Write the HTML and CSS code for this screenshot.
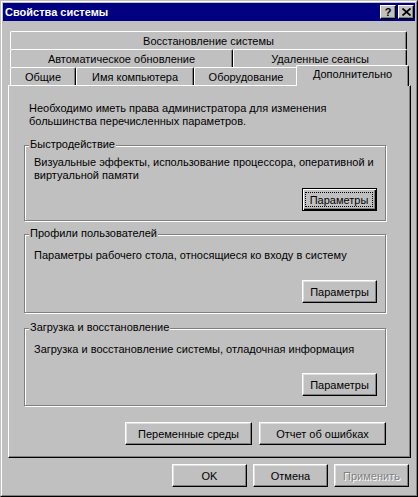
FILE: index.html
```html
<!DOCTYPE html>
<html lang="ru">
<head>
<meta charset="utf-8">
<title>Свойства системы</title>
<link rel="stylesheet" href="styles.css">
</head>
<body>
<div class="window">
  <div class="frame">
    <div class="titlebar">
      <span class="title">Свойства системы</span>
      <div class="caption-buttons">
        <button class="cap-btn cap-help">?</button>
        <button class="cap-btn cap-close"><svg width="9" height="8" viewBox="0 0 9 8"><path d="M0.5 0.5L8.5 7.5M8.5 0.5L0.5 7.5" stroke="#000" stroke-width="1.7" fill="none"/></svg></button>
      </div>
    </div>
    <div class="client">
      <div class="tabstrip">
        <div class="tabrow">
          <div class="tab t-restore">Восстановление системы</div>
        </div>
        <div class="tabrow">
          <div class="tab t-auto">Автоматическое обновление</div>
          <div class="tab t-remote">Удаленные сеансы</div>
        </div>
        <div class="tabrow">
          <div class="tab t-general">Общие</div>
          <div class="tab t-name">Имя компьютера</div>
          <div class="tab t-hw">Оборудование</div>
          <div class="tab t-adv active">Дополнительно</div>
        </div>
      </div>
      <div class="panel">
        <p class="intro">Необходимо иметь права администратора для изменения<br>большинства перечисленных параметров.</p>
        <div class="group g-perf">
          <div class="group-title">Быстродействие</div>
          <p class="group-text">Визуальные эффекты, использование процессора, оперативной и<br>виртуальной памяти</p>
          <div class="group-actions"><button class="btn default"><span class="focus">Параметры</span></button></div>
        </div>
        <div class="group g-prof">
          <div class="group-title">Профили пользователей</div>
          <p class="group-text">Параметры рабочего стола, относящиеся ко входу в систему</p>
          <div class="group-actions"><button class="btn">Параметры</button></div>
        </div>
        <div class="group g-boot">
          <div class="group-title">Загрузка и восстановление</div>
          <p class="group-text">Загрузка и восстановление системы, отладочная информация</p>
          <div class="group-actions"><button class="btn">Параметры</button></div>
        </div>
        <div class="panel-actions">
          <button class="btn wide">Переменные среды</button>
          <button class="btn wide">Отчет об ошибках</button>
        </div>
      </div>
      <div class="dialog-actions">
        <button class="btn">OK</button>
        <button class="btn">Отмена</button>
        <button class="btn disabled">Применить</button>
      </div>
    </div>
  </div>
</div>
</body>
</html>
```
FILE: styles.css
```css
* { box-sizing: border-box; }
html, body { margin: 0; padding: 0; background: #c0c0c0; }
body {
  font-family: "Liberation Sans", Arial, sans-serif;
  font-size: 11px;
  line-height: 13px;
  color: #000;
}
p { margin: 0; }

.window {
  width: 418px;
  height: 497px;
  border: 1px solid;
  border-color: #c0c0c0 #000 #000 #c0c0c0;
  background: #c0c0c0;
}
.frame {
  height: 100%;
  border: 1px solid;
  border-color: #fff #808080 #808080 #fff;
  padding: 1px;
}

.titlebar {
  height: 18px;
  background: #000080;
  display: flex;
  align-items: center;
  justify-content: space-between;
  padding: 0 1px 0 2px;
}
.title {
  color: #fff;
  font-weight: bold;
  font-size: 11px;
  line-height: 18px;
}
.caption-buttons { display: flex; gap: 2px; }
.cap-btn {
  width: 16px;
  height: 14px;
  padding: 0;
  background: #c0c0c0;
  border: 1px solid;
  border-color: #fff #000 #000 #fff;
  box-shadow: inset -1px -1px #808080;
  display: flex;
  align-items: center;
  justify-content: center;
  font-family: "Liberation Sans", Arial, sans-serif;
  font-weight: bold;
  font-size: 11px;
  line-height: 12px;
  color: #000;
}

.client { padding: 10px 4px 0 5px; }

.tabstrip { margin: 0 4px 0 2px; }
.tabrow { display: flex; height: 18px; }
.tab {
  height: 18px;
  border: 1px solid;
  border-bottom: none;
  border-color: #fff #000 #000 #fff;
  border-radius: 2px 2px 0 0;
  box-shadow: inset -1px 0 #808080;
  background: #c0c0c0;
  text-align: center;
  padding-top: 3px;
  white-space: nowrap;
}
.t-restore { width: 397px; }
.t-auto { width: 223px; }
.t-remote { width: 174px; }
.t-general { width: 66px; }
.t-name { width: 118px; }
.t-hw { width: 104px; }
.t-adv { width: 109px; }
.tab.active {
  position: relative;
  z-index: 1;
  width: 113px;
  height: 21px;
  margin: -2px -2px -1px -2px;
  padding-top: 2px;
}

.panel {
  height: 373px;
  border: 1px solid;
  border-color: #fff #000 #000 #fff;
  box-shadow: inset -1px -1px #808080;
  padding: 16px 0 0 15px;
}
.intro { margin-left: 5px; }

.group {
  width: 362px;
  border: 1px solid #808080;
  box-shadow: inset 1px 1px #fff, 1px 1px #fff;
  display: flex;
  flex-direction: column;
  padding: 0 8px 9px 9px;
}
.group-title {
  align-self: flex-start;
  margin: -8px 0 0 -5px;
  padding: 0 1px;
  background: #c0c0c0;
}
.g-perf { height: 76px; margin-top: 17px; }
.g-perf .group-text { margin-top: 5px; }
.g-prof { height: 79px; margin-top: 13px; }
.g-boot { height: 78px; margin-top: 15px; }
.g-prof .group-text, .g-boot .group-text { margin-top: 9px; }
.group-actions { margin-top: auto; display: flex; justify-content: flex-end; }

.btn {
  width: 75px;
  height: 23px;
  padding: 0;
  font-family: "Liberation Sans", Arial, sans-serif;
  font-size: 11px;
  color: #000;
  background: #c0c0c0;
  border: 1px solid;
  border-color: #fff #000 #000 #fff;
  box-shadow: inset -1px -1px #808080, inset 1px 1px #dfdfdf;
}
.btn.default {
  border-color: #000;
  box-shadow: inset 1px 1px #fff, inset -1px -1px #000, inset -2px -2px #808080;
  display: flex;
  align-items: stretch;
}
.btn .focus {
  flex: 1;
  margin: 3px 3px 3px 2px;
  border: 1px dotted #000;
  display: flex;
  align-items: center;
  justify-content: center;
}
.btn.wide { width: 127px; }
.btn.disabled { color: #808080; text-shadow: 1px 1px 0 #fff; }

.panel-actions {
  width: 362px;
  margin-top: 16px;
  display: flex;
  justify-content: flex-end;
  gap: 7px;
}

.dialog-actions {
  margin: 6px 2px 0 0;
  display: flex;
  justify-content: flex-end;
  gap: 6px;
}
```
